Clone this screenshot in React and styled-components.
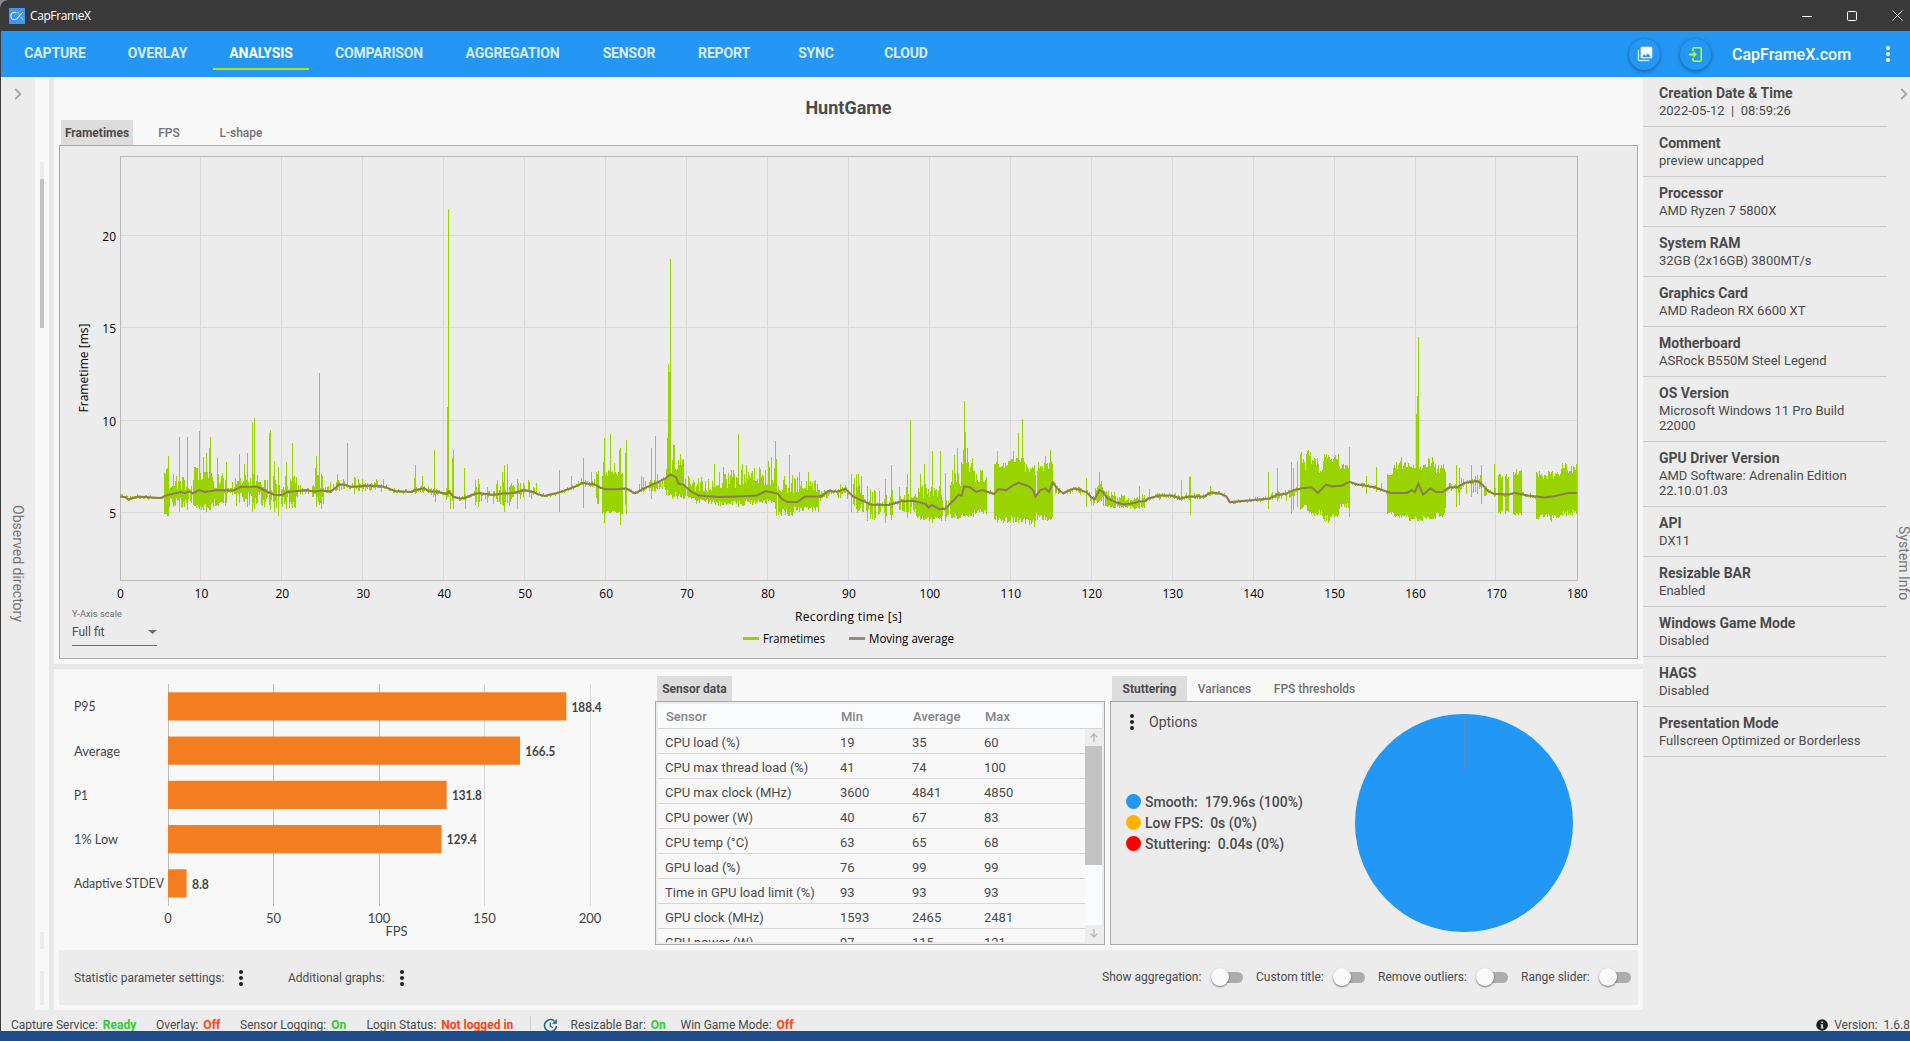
import React from "react";
import styled, { createGlobalStyle } from "styled-components";

const GlobalStyle = createGlobalStyle`
  * {
    box-sizing: border-box;
  }

  body {
    margin: 0;
    background: #8a8a8a;
    font-family: Roboto, "Liberation Sans", sans-serif;
    color: #4b4b4b;
    overflow: hidden;
  }
`;

/* ---------- data ---------- */

const NAV = [
  { label: "CAPTURE", width: 94 },
  { label: "OVERLAY", width: 91 },
  { label: "ANALYSIS", width: 96, active: true },
  { label: "COMPARISON", width: 120 },
  { label: "AGGREGATION", width: 127 },
  { label: "SENSOR", width: 86 },
  { label: "REPORT", width: 84 },
  { label: "SYNC", width: 80 },
  { label: "CLOUD", width: 80 },
];

const SYSTEM_INFO = [
  ["Creation Date & Time", "2022-05-12  |  08:59:26"],
  ["Comment", "preview uncapped"],
  ["Processor", "AMD Ryzen 7 5800X"],
  ["System RAM", "32GB (2x16GB) 3800MT/s"],
  ["Graphics Card", "AMD Radeon RX 6600 XT"],
  ["Motherboard", "ASRock B550M Steel Legend"],
  ["OS Version", "Microsoft Windows 11 Pro Build 22000"],
  ["GPU Driver Version", "AMD Software: Adrenalin Edition 22.10.01.03"],
  ["API", "DX11"],
  ["Resizable BAR", "Enabled"],
  ["Windows Game Mode", "Disabled"],
  ["HAGS", "Disabled"],
  ["Presentation Mode", "Fullscreen Optimized or Borderless"],
];

const SENSORS = [
  ["CPU load (%)", 19, 35, 60],
  ["CPU max thread load (%)", 41, 74, 100],
  ["CPU max clock (MHz)", 3600, 4841, 4850],
  ["CPU power (W)", 40, 67, 83],
  ["CPU temp (°C)", 63, 65, 68],
  ["GPU load (%)", 76, 99, 99],
  ["Time in GPU load limit (%)", 93, 93, 93],
  ["GPU clock (MHz)", 1593, 2465, 2481],
  ["GPU power (W)", 97, 115, 121],
];

const FPS_BARS = [
  ["P95", 188.4, 21.5],
  ["Average", 166.5, 46],
  ["P1", 131.8, 14],
  ["1% Low", 129.4, 44],
  ["Adaptive STDEV", 8.8, 90],
];

const TOGGLES = [
  { label: "Show aggregation:", width: 100 },
  { label: "Custom title:", width: 68 },
  { label: "Remove outliers:", width: 89 },
  { label: "Range slider:", width: 69 },
];

// moving average: time [s], frametime [ms]
const AVERAGE = [
  [0, 5.85], [0.6, 5.83], [1, 5.7], [2.2, 5.85], [5, 5.78], [5.8, 5.92], [7.5, 6.1], [8, 6.05], [8.5, 6.12],
  [9, 6.03], [9.8, 6.2], [10.5, 6.1], [12, 6.2], [14, 6.18], [15, 6.38], [17, 6.38], [18, 6.15], [19, 5.95],
  [20, 5.93], [20.7, 6.1], [23, 6.2], [24, 6.12], [25, 6.18], [26, 6.12], [26.7, 6.35], [27, 6.5], [27.7, 6.5],
  [28.5, 6.38], [31, 6.45], [32.5, 6.4], [34, 6.15], [36, 6.1], [36.6, 6.22], [37.6, 6.3], [38.2, 6.12],
  [39, 6.12], [40.4, 6], [40.6, 6.12], [41.2, 5.85], [42, 5.75], [42.7, 5.8], [43.5, 5.95], [44.3, 6.05],
  [46, 5.95], [47, 6], [48.5, 6.05], [50, 6.2], [51, 6.1], [51.7, 5.97], [52.5, 5.88], [53.1, 5.97], [54, 6.05],
  [55, 6.2], [56, 6.35], [57.2, 6.6], [58, 6.52], [58.5, 6.55], [59.2, 6.35], [60, 6.25], [61.5, 6.25],
  [62.5, 6.3], [63.6, 6.02], [65, 6.35], [66, 6.55], [67.3, 6.8], [68, 7.05], [68.7, 6.9], [69, 6.55],
  [69.6, 6.5], [70.5, 6.15], [71.5, 5.9], [74, 5.82], [77, 5.87], [78.7, 5.9], [79.8, 6.15], [81.3, 6],
  [81.8, 5.7], [82.5, 5.55], [83.7, 5.55], [84.6, 5.85], [86.6, 5.85], [87.5, 6.15], [88.7, 6.12], [89.6, 6.28],
  [90.6, 5.85], [91.6, 5.65], [92.8, 5.42], [95, 5.4], [96.5, 5.6], [98, 5.62], [99.5, 5.45], [99.9, 5.25],
  [100.3, 5.4], [101.2, 5.17], [101.9, 5.17], [103, 5.65], [103.6, 5.95], [104, 5.9], [104.3, 6.4], [105, 6.35],
  [105.8, 6.1], [106.5, 6.2], [108, 6], [108.5, 6.25], [109.5, 6.2], [110.3, 6.45], [111, 6.6], [112.3, 6.4],
  [112.8, 6.2], [113.1, 5.85], [113.7, 6.2], [114.3, 6.3], [114.8, 6.1], [115.2, 6.6], [116, 6.2], [116.5, 6.03],
  [117.3, 6.2], [118, 6.3], [119.4, 6.1], [120, 5.8], [120.4, 5.7], [121, 6.2], [121.3, 6.15], [122, 5.75],
  [123, 5.55], [124, 5.42], [125.3, 5.5], [126, 5.6], [126.6, 5.6], [127, 5.75], [128.5, 5.9], [130, 5.9],
  [131, 5.75], [132, 5.85], [134, 5.87], [134.8, 6.08], [136, 6], [136.7, 5.85], [137.1, 5.55], [140, 5.67],
  [142, 5.75], [143, 5.95], [144, 6], [145, 6.2], [146, 6.3], [147.2, 6.35], [148, 6.05], [149, 6.5],
  [149.7, 6.4], [151, 6.45], [151.9, 6.65], [153, 6.5], [155, 6.35], [157, 6.05], [159, 6.05], [159.6, 6.2],
  [160, 6.1], [160.4, 6.55], [161, 5.95], [161.9, 6.3], [162.6, 6.1], [163.4, 6.1], [164.2, 6.35],
  [165.2, 6.35], [166.2, 6.6], [167.7, 6.7], [168.3, 6.5], [169, 6.15], [169.7, 6], [171.5, 5.97], [172.3, 6.05],
  [174, 5.9], [176, 5.8], [177, 5.85], [178.5, 6], [179, 6.05], [180, 6.05],
];

// jitter around the average: from, to, density, top min/max, bottom min/max
const BANDS = [
  [5.4, 6, 1, 7, 7.4, 4.8, 5.1],
  [6, 9, 0.9, 6.2, 7.1, 5.2, 5.8],
  [9, 11.6, 1, 6.6, 7.5, 5.1, 5.5],
  [11.6, 13.2, 0.92, 6.3, 7.3, 5.3, 5.9],
  [13.2, 14.2, 0.5, 6.3, 6.7, 5.9, 6.1],
  [14.2, 17.4, 0.92, 6.4, 7.1, 5.3, 6.1],
  [17.4, 21.8, 0.9, 6.2, 7, 5.2, 5.9],
  [21.8, 24, 0.6, 6.2, 6.6, 5.8, 6.1],
  [24, 25.2, 0.8, 6.3, 7.1, 5.2, 5.9],
  [25.2, 29, 0.5, 6.3, 6.8, 6.1, 6.4],
  [29, 32.5, 0.7, 6.4, 7, 6.1, 6.4],
  [36, 38.3, 0.5, 6.2, 6.9, 6, 6.2],
  [38.3, 41.2, 0.45, 6.1, 6.5, 5.5, 6],
  [43.7, 46.4, 0.5, 6, 6.7, 5.4, 5.9],
  [46.4, 48.4, 0.8, 6.2, 6.8, 5.3, 5.8],
  [48.4, 51.5, 0.7, 6.2, 6.7, 5.7, 6.1],
  [56, 58.8, 0.4, 6.5, 6.9, 6.3, 6.5],
  [58.6, 59.1, 0.8, 6.9, 7.7, 5.2, 6],
  [59.5, 62.1, 0.97, 6.9, 7.8, 4.9, 5.1],
  [64, 67.4, 0.6, 6.3, 7.1, 6.1, 6.4],
  [67.4, 69.6, 1, 7.1, 8, 5.7, 6.3],
  [69.6, 71, 0.9, 6.3, 7.1, 5.7, 5.9],
  [71, 73.5, 0.98, 6.1, 6.9, 5.4, 5.7],
  [73.5, 77.3, 0.98, 6.3, 7.3, 5.3, 5.6],
  [77.3, 81, 0.98, 6.4, 7.6, 5.4, 5.7],
  [81, 83.2, 0.97, 6, 7.1, 4.8, 5.2],
  [83.2, 86.3, 0.97, 6.1, 7, 5, 5.3],
  [86.3, 87.6, 0.6, 5.9, 6.2, 5.6, 6],
  [88.5, 90.2, 0.5, 6.1, 6.6, 5.7, 6.1],
  [90.2, 92, 0.8, 5.9, 7.1, 4.9, 5.5],
  [92, 95.5, 0.7, 5.5, 6.3, 4.6, 5.1],
  [96, 98.4, 0.8, 5.7, 6.6, 4.8, 5.3],
  [98.4, 101.5, 1, 5.7, 6.6, 4.5, 4.8],
  [101.5, 102.4, 0.8, 5.4, 5.8, 4.7, 5],
  [102.5, 103.8, 1, 6.2, 7.4, 4.6, 4.9],
  [103.8, 105.4, 1, 7.1, 8, 4.7, 5],
  [105.4, 107.1, 0.95, 6.6, 7.5, 4.9, 5.2],
  [107.9, 109.8, 1, 7.4, 7.8, 4.4, 4.8],
  [109.8, 111.7, 1, 7.7, 8.1, 4.4, 4.8],
  [111.7, 113.05, 1, 7, 7.6, 4.3, 4.7],
  [113.05, 113.25, 1, 5.9, 6, 4.9, 5],
  [113.25, 115.2, 1, 7.2, 7.8, 4.5, 4.9],
  [115.5, 119, 0.25, 6.2, 6.4, 5.9, 6.1],
  [119.8, 120.4, 0.9, 5.8, 6.1, 5.3, 5.6],
  [120.4, 121.4, 1, 6.2, 6.7, 5.5, 5.9],
  [121.4, 123, 0.95, 5.8, 6.2, 5.2, 5.4],
  [123, 126.6, 0.9, 5.6, 6, 5.15, 5.35],
  [128, 134.4, 0.4, 5.8, 6.1, 5.65, 5.85],
  [141.8, 145.6, 0.45, 5.9, 6.3, 5.5, 5.9],
  [145.7, 146.6, 1, 7.2, 8.3, 5.1, 5.5],
  [146.6, 147.1, 1, 8, 8.4, 4.9, 5.2],
  [147.1, 148.1, 1, 7.5, 8, 4.8, 5],
  [148.1, 148.6, 0.95, 7, 7.4, 4.8, 5.1],
  [148.6, 150.5, 1, 7.7, 8.2, 4.5, 4.9],
  [150.5, 151.9, 1, 7.3, 7.7, 5.2, 5.5],
  [156.5, 157.4, 0.97, 7, 7.4, 4.8, 5],
  [157.4, 159.2, 1, 7.3, 7.8, 4.7, 4.9],
  [159.2, 161, 1, 7.2, 7.6, 4.5, 4.8],
  [161, 162.5, 1, 7.4, 8, 4.6, 4.8],
  [162.5, 163.6, 1, 7, 7.6, 4.7, 5],
  [164, 168.2, 0.4, 6.5, 7.1, 6, 6.4],
  [168.5, 170, 0.4, 6.1, 6.4, 5.8, 6.1],
  [170.2, 170.8, 1, 6.8, 7.1, 4.9, 5.1],
  [171.1, 171.6, 1, 6.7, 7.1, 4.9, 5.1],
  [172, 173.2, 1, 7, 7.4, 4.8, 5],
  [174.9, 178, 1, 6.8, 7.3, 4.6, 4.9],
  [178, 180, 1, 7.1, 7.7, 4.7, 5.1],
];

// single outliers: time, bottom, top
const SPIKES = [
  [5.9, 5, 8.05], [7.3, 5, 9.08], [8.3, 5.1, 9.08], [9.75, 5.2, 9.4], [10.2, 5.1, 8], [10.6, 5, 8.2],
  [10.95, 5.3, 8.5], [11.1, 5.1, 9.08], [12, 5.4, 7.95], [13.1, 5.5, 7.7], [14.7, 5.5, 8.15], [15.3, 5.8, 7.6],
  [15.65, 5.3, 8.2], [16.3, 5, 9.9], [16.55, 5.15, 10.1], [18.4, 5.4, 9.3], [18.55, 5.1, 9.45], [19, 5, 7.8],
  [19.5, 4.8, 7.45], [20.5, 5.2, 7.7], [21.25, 5.25, 8.75], [24.1, 6, 7.4], [24.25, 5.9, 8.05],
  [24.6, 5.4, 12.55], [24.8, 5.2, 7.1], [26.8, 6.3, 7.05], [28.1, 6.3, 8.75], [28.9, 6, 6.9], [36.45, 6, 7.55],
  [37.3, 6.1, 6.95], [38.8, 6, 8.4], [40.4, 5.8, 10.7], [40.55, 5.8, 21.45], [40.8, 5.15, 6.2], [41, 5.6, 7.95],
  [41.1, 5.15, 8.4], [42.5, 5.7, 7.4], [42.63, 5.15, 6], [43.9, 5.4, 6.75], [44.2, 5.3, 6.8], [47.2, 5.4, 7.2],
  [47.4, 5, 7.55], [47.8, 5.5, 7.6], [49, 5.15, 6.8], [50.4, 6.2, 6.75], [54.2, 5, 7.3], [55.7, 6.2, 6.97],
  [57.2, 5.25, 7.95], [58.2, 6.4, 7.2], [59.8, 4.4, 9.03], [60.55, 5, 9.25], [61.6, 5, 8.4], [61.75, 4.3, 8.5],
  [62.35, 5.4, 8.2], [62.5, 4.9, 8.9], [65.6, 5.7, 8.5], [66.1, 6.1, 9.15], [67.6, 6.6, 9], [67.73, 6, 13.05],
  [67.86, 6, 12.6], [68, 6, 18.7], [68.3, 5.8, 8.65], [68.45, 5.8, 8.65], [69.2, 5.8, 8.15], [73.4, 5.5, 7.6],
  [74.5, 5.4, 7.45], [76.35, 5.4, 9.25], [76.8, 5.5, 7.6], [80.1, 5.6, 7.8], [80.45, 5.5, 8], [80.9, 5.2, 8.85],
  [81.1, 5, 7.9], [82.65, 4.8, 8.1], [83.9, 5, 7.2], [85, 5.1, 7.2], [90.3, 5, 7.1], [92.3, 4.5, 6.4],
  [93.1, 4.6, 6.2], [94.5, 4.4, 6.8], [95.3, 4.6, 7.55], [97.2, 4.7, 7.1], [97.6, 4.9, 10], [98.9, 4.6, 7.1],
  [99.3, 4.6, 7.6], [100.3, 4.4, 8.3], [101.3, 4.8, 8.3], [101.9, 4.5, 7.15], [103, 4.7, 8.1], [103.4, 4.7, 8.5],
  [104.15, 4.8, 8.4], [104.28, 4.8, 11.05], [104.4, 4.8, 9.35], [104.6, 4.8, 8.5], [108.35, 4.4, 8.3],
  [110.3, 4.4, 8.3], [110.95, 4.4, 9.3], [111.45, 4.5, 10.05], [112.95, 4.2, 7.5], [114.3, 4.6, 8.05],
  [114.9, 4.8, 8.4], [119.35, 5.3, 6.85], [120.95, 5.6, 7.2], [125.9, 5.2, 6.4], [127.1, 5.7, 6.25],
  [131.1, 5.7, 6.75], [132.1, 5.7, 6.9], [132.2, 4.87, 6.97], [134.7, 5.9, 6.4], [141.8, 5.15, 7.2],
  [142.95, 5.6, 7.4], [144.7, 4.9, 7.7], [144.95, 5.1, 7.4], [145.4, 5.3, 7.8], [149.3, 4.4, 8.1],
  [151.85, 4.75, 8.55], [154, 6, 6.97], [155.15, 6.1, 7.45], [155.8, 6.2, 6.6], [158.3, 4.7, 8],
  [160.13, 4.7, 10.35], [160.25, 4.7, 11.3], [160.38, 4.5, 14.5], [163.75, 5.25, 7.2], [165, 5.3, 7.55],
  [165.4, 5.4, 7.4], [166.9, 5.8, 7.55], [168.1, 5.45, 7.55], [169.7, 5.8, 7.6], [176.8, 4.45, 7.2],
];

/* ---------- frametime chart ---------- */

const X0 = 60;
const Y0 = 458.5;
const PX_PER_S = 8.094;
const PX_PER_MS = 18.45;
const px = (t) => X0 + t * PX_PER_S;
const py = (v) => Y0 - v * PX_PER_MS;

const averageAt = (t) => {
  for (let i = 1; i < AVERAGE.length; i++) {
    const [t1, v1] = AVERAGE[i];
    if (t <= t1) {
      const [t0, v0] = AVERAGE[i - 1];
      return v0 + ((v1 - v0) * (t - t0)) / (t1 - t0);
    }
  }
  return AVERAGE[AVERAGE.length - 1][1];
};

const buildFrametimes = () => {
  let seed = 4711;
  const random = () => {
    seed = (seed * 1664525 + 1013904223) % 4294967296;
    return seed / 4294967296;
  };
  let d = "";
  const column = (x, lo, hi) => {
    const top = Math.round(py(hi));
    const bottom = Math.round(py(lo));
    d += `M${x} ${top}h1V${Math.max(bottom, top + 2)}h-1z`;
  };

  for (let x = X0; x < X0 + 1457; x++) {
    const t = (x - X0) / PX_PER_S;
    const mid = averageAt(t);
    column(x, mid - 0.03 - (random() > 0.8 ? 0.1 : 0), mid + 0.03 + (random() > 0.8 ? 0.1 : 0));
    const band = BANDS.find(([from, to]) => t >= from && t < to);
    const roll = random();
    const up = random();
    const down = random();
    if (band && roll < band[2]) {
      const [, , density, t0, t1, b0, b1] = band;
      // sparse bands keep most of their samples near the average
      const bias = density < 1 ? 1.4 : 1;
      const hi = t0 + (t1 - t0) * Math.pow(up, bias);
      const lo = b1 - (b1 - b0) * Math.pow(down, bias);
      column(x, Math.min(lo, mid), Math.max(hi, mid));
    }
  }
  SPIKES.forEach(([t, lo, hi]) => column(Math.round(px(t)), lo, hi));
  return d;
};

const FRAMETIME_PATH = buildFrametimes();
const AVERAGE_PATH = AVERAGE.map(([t, v], i) => `${i ? "L" : "M"}${px(t).toFixed(1)} ${py(v).toFixed(1)}`).join("");

const SECONDS = Array.from({ length: 19 }, (_, i) => i * 10);

const FrametimeChart = () => (
  <PlotSvg width="1577" height="450" viewBox="0 0 1577 450">
    <g stroke="#d9d9d9" shapeRendering="crispEdges">
      {SECONDS.slice(1, -1).map((s) => (
        <line key={s} x1={px(s)} x2={px(s)} y1="11" y2="434" />
      ))}
      {[5, 10, 15, 20].map((v) => (
        <line key={v} x1={X0} x2={X0 + 1457} y1={py(v)} y2={py(v)} />
      ))}
    </g>
    <rect x="60.5" y="10.5" width="1457" height="424" fill="none" stroke="#b9b9b9" />
    <path d={FRAMETIME_PATH} fill="#9ad400" shapeRendering="crispEdges" />
    <path d={AVERAGE_PATH} fill="none" stroke="#8a7558" strokeOpacity="0.93" strokeWidth="2" />
    {SECONDS.map((s) => (
      <text key={s} x={px(s) + 0.5} y="452" textAnchor="middle">
        {s}
      </text>
    ))}
    {[5, 10, 15, 20].map((v) => (
      <text key={v} x="56" y={py(v) + 5.5} textAnchor="end">
        {v}
      </text>
    ))}
    <text x="-222" y="28" transform="rotate(-90)" textAnchor="middle" textLength="89">
      Frametime [ms]
    </text>
    <text x="735" y="475" textLength="107">
      Recording time [s]
    </text>
    <rect x="683" y="491" width="16" height="3" fill="#9ad400" />
    <text x="703" y="497" textLength="62" lengthAdjust="spacingAndGlyphs">
      Frametimes
    </text>
    <rect x="789" y="491" width="16" height="3" fill="#9f8480" />
    <text x="809" y="497" textLength="85" lengthAdjust="spacingAndGlyphs">
      Moving average
    </text>
  </PlotSvg>
);

/* ---------- fps bars ---------- */

const FpsBars = () => (
  <BarsSvg width="596" height="281" viewBox="0 0 596 281">
    <g shapeRendering="crispEdges">
      {[0, 50, 100, 150, 200].map((v) => (
        <rect key={v} x={Math.round(108.6 + v * 2.11)} y="15" width="1" height="222" fill={v > 100 ? "#d8d8d8" : "#bdbdbd"} />
      ))}
    </g>
    {FPS_BARS.map(([label, value, width], i) => (
      <g key={label}>
        <text x="15" y={42.3 + i * 44.25} textLength={width} lengthAdjust="spacingAndGlyphs">
          {label}
        </text>
        <rect x="109" y={23.3 + i * 44.25} width={value * 2.114} height="28.2" fill="#f37d21" />
        <text
          className="value"
          x={114.3 + value * 2.114}
          y={42.6 + i * 44.25}
          textLength={value < 10 ? 17 : 30}
          lengthAdjust="spacingAndGlyphs"
        >
          {value}
        </text>
      </g>
    ))}
    {[0, 50, 100, 150, 200].map((v) => (
      <text key={v} x={109 + v * 2.11} y="254" textAnchor="middle">
        {v}
      </text>
    ))}
    <text x="337.5" y="267" textAnchor="middle">
      FPS
    </text>
  </BarsSvg>
);

/* ---------- small parts ---------- */

const Chevron = () => (
  <svg width="8" height="12" viewBox="0 0 8 12" fill="none" stroke="#a3a3a3" strokeWidth="1.8">
    <path d="M1.2 0.8 6.3 6 1.2 11.2" />
  </svg>
);

const Kebab = ({ color = "#222" }) => (
  <svg width="6" height="18" viewBox="0 0 6 18" fill={color}>
    <circle cx="3" cy="3" r="2" />
    <circle cx="3" cy="9" r="2" />
    <circle cx="3" cy="15" r="2" />
  </svg>
);

const Status = ({ label, value, ok, width }) => (
  <StatusItem $width={width}>
    {label} <StatusValue $ok={ok}>{value}</StatusValue>
  </StatusItem>
);

const App = () => {
  return (
    <Window>
      <GlobalStyle />
      <TitleBar>
        <Logo width="16" height="16" viewBox="0 0 16 16">
          <rect width="16" height="16" fill="#3f97f6" />
          <path d="M7.5 4.5H3.8L2 6v4l1.8 1.5h3.4L14 4" fill="none" stroke="#fff" />
          <path d="M9 4.5l1.6 2.2M12 9l2.4 3" stroke="#7bea3a" strokeWidth="1.3" fill="none" />
        </Logo>
        <AppName>CapFrameX</AppName>
        <WindowButtons>
          <svg width="10" height="10" viewBox="0 0 10 10" stroke="#fff"><path d="M0 5.5h10" /></svg>
          <svg width="10" height="10" viewBox="0 0 10 10" stroke="#fff" fill="none"><rect x=".5" y=".5" width="9" height="9" rx="1" /></svg>
          <svg width="11" height="11" viewBox="0 0 11 11" stroke="#fff"><path d="M.5.5l10 10M10.5.5l-10 10" /></svg>
        </WindowButtons>
      </TitleBar>

      <NavBar>
        {NAV.map((item) => (
          <NavTab key={item.label} $width={item.width} $active={item.active}>
            {item.label}
          </NavTab>
        ))}
        <NavActions>
          <RoundButton>
            <svg width="16" height="16" viewBox="1 1 22 22" fill="#fff">
              <path d="M22 16V4c0-1.100-.9-2-2-2H8c-1.100 0-2 .9-2 2v12c0 1.100.9 2 2 2h12c1.100 0 2-.9 2-2zm-11-4l2.030 2.710L16 11l4 5H8l3-4z" />
              <path d="M2 6v14c0 1.100.9 2 2 2h14v-2H4V6H2z" opacity=".75" />
            </svg>
          </RoundButton>
          <RoundButton>
            <svg width="13" height="15" viewBox="0 0 13 15" fill="none" stroke="#adff2f" strokeWidth="1.6">
              <path d="M4 4V1.800q0-1 1-1h6.200q1 0 1 1v11.400q0 1-1 1H5q-1 0-1-1V11" />
              <path d="M0 7.500h5" strokeWidth="2" />
              <path d="M4.400 4.200 8 7.500l-3.600 3.300z" fill="#adff2f" stroke="none" />
            </svg>
          </RoundButton>
          <SiteLink>CapFrameX.com</SiteLink>
          <Kebab color="#fff" />
        </NavActions>
      </NavBar>

      <Body>
        <Rail>
          <Chevron />
          <RailLabel $top={405}>Observed directory</RailLabel>
        </Rail>
        <ScrollGutter>
          <GutterPiece $top={85} $height={17} />
          <GutterPiece $height={149} $thumb />
          <GutterPiece $top={604} $height={17} />
          <GutterPiece $top={22} $height={34} />
        </ScrollGutter>
        <Splitter />

        <Main>
          <GameTitle>HuntGame</GameTitle>
          <TabRow $inset={2}>
            <Tab $width={72} $active>Frametimes</Tab>
            <Tab $width={72}>FPS</Tab>
            <Tab $width={72}>L-shape</Tab>
          </TabRow>
          <ChartPanel>
            <FrametimeChart />
            <ScaleSelect>
              <ScaleLabel>Y-Axis scale</ScaleLabel>
              <ScaleValue>
                Full fit
                <svg width="9" height="4" viewBox="0 0 9 4" fill="#707070"><path d="M0 0h9L4.500 4z" /></svg>
              </ScaleValue>
            </ScaleSelect>
          </ChartPanel>
          <RowSplitter />

          <BottomRow>
            <FpsBars />
            <SensorColumn>
              <TabRow $inset={2}>
                <Tab $width={75} $active>Sensor data</Tab>
              </TabRow>
              <Panel>
                <SensorTable>
                  <SensorHead>
                    <span>Sensor</span>
                    <span>Min</span>
                    <span>Average</span>
                    <span>Max</span>
                  </SensorHead>
                  <SensorScroll>
                    <SensorRows>
                      {SENSORS.map(([name, ...values]) => (
                        <SensorRow key={name}>
                          <span>{name}</span>
                          {values.map((value, i) => (
                            <span key={i}>{value}</span>
                          ))}
                        </SensorRow>
                      ))}
                    </SensorRows>
                    <Scrollbar>
                      <ScrollArrow>
                        <svg width="8" height="9" viewBox="0 0 8 9" fill="none" stroke="#b5b7b6" strokeWidth="1.300"><path d="M4 9V1M.6 4.400 4 1l3.400 3.400" /></svg>
                      </ScrollArrow>
                      <ScrollThumb />
                      <ScrollArrow $end>
                        <svg width="8" height="9" viewBox="0 0 8 9" fill="none" stroke="#b5b7b6" strokeWidth="1.300"><path d="M4 0v8M.6 4.600 4 8l3.400-3.400" /></svg>
                      </ScrollArrow>
                    </Scrollbar>
                  </SensorScroll>
                </SensorTable>
              </Panel>
            </SensorColumn>

            <StutterColumn>
              <TabRow $inset={2}>
                <Tab $width={75} $active>Stuttering</Tab>
                <Tab $width={75}>Variances</Tab>
                <Tab $width={105}>FPS thresholds</Tab>
              </TabRow>
              <StutterPanel>
                <StutterSide>
                  <Options>
                    <Kebab />
                    Options
                  </Options>
                  <Legend>
                    <li><Dot $color="#2397f4" />Smooth:&nbsp; 179.96s (100%)</li>
                    <li><Dot $color="#ffb300" />Low FPS:&nbsp; 0s (0%)</li>
                    <li><Dot $color="#ff0000" />Stuttering:&nbsp; 0.04s (0%)</li>
                  </Legend>
                </StutterSide>
                <Pie width="218" height="218" viewBox="0 0 218 218">
                  <circle cx="109" cy="109" r="109" fill="#2397f4" />
                  <path d="M109.500 0v55" stroke="#5c8ad0" />
                </Pie>
              </StutterPanel>
            </StutterColumn>
          </BottomRow>

          <SettingsBar>
            <SettingLabel $width={150}>Statistic parameter settings:</SettingLabel>
            <Kebab />
            <SettingLabel $width={97} $left={30}>Additional graphs:</SettingLabel>
            <Kebab />
            <Toggles>
              {TOGGLES.map(({ label, width }) => (
                <ToggleItem key={label}>
                  <SettingLabel $width={width}>{label}</SettingLabel>
                  <Track>
                    <Knob />
                  </Track>
                </ToggleItem>
              ))}
            </Toggles>
          </SettingsBar>
        </Main>

        <InfoPanel>
          {SYSTEM_INFO.map(([name, value]) => (
            <InfoItem key={name}>
              <h4>{name}</h4>
              <p>{value}</p>
            </InfoItem>
          ))}
        </InfoPanel>
        <InfoRail>
          <Chevron />
          <RailLabel $top={426}>System Info</RailLabel>
        </InfoRail>
      </Body>

      <StatusBar>
        <Status label="Capture Service:" value="Ready" ok width={145} />
        <Status label="Overlay:" value="Off" width={84} />
        <Status label="Sensor Logging:" value="On" ok width={126.5} />
        <Status label="Login Status:" value="Not logged in" width={163} />
        <Divider />
        <svg width="15" height="15" viewBox="0 0 15 15" fill="none" stroke="#1f6587" strokeWidth="1.600">
          <path d="M11.200 2.800A6 6 0 1 0 13.500 8" />
          <path d="M13.800 1v4.800H9z" fill="#1f6587" stroke="none" />
          <path d="M7.300 4.500v3.700l2.600 1.600" strokeWidth="1.300" />
        </svg>
        <Spacer />
        <Status label="Resizable Bar:" value="On" ok width={110} />
        <Status label="Win Game Mode:" value="Off" width={120} />
        <Version>
          <svg width="14" height="14" viewBox="0 0 14 14">
            <circle cx="7" cy="7" r="6.700" fill="#1d1d1d" />
            <path d="M6 3h2v1.700H6zM5.300 6H8v3.800h.8V11H5.300V9.800h.8V7.200h-.8z" fill="#ececec" />
          </svg>
          <span>Version:&nbsp; 1.6.8</span>
        </Version>
      </StatusBar>
      <Taskbar />
    </Window>
  );
};

/* ---------- styles ---------- */

const Window = styled.div`
  display: flex;
  flex-direction: column;
  width: 1910px;
  height: 1041px;
  overflow: hidden;
  border-radius: 8px 0 0 0;
  background: #ececec;
`;

const TitleBar = styled.header`
  display: flex;
  align-items: center;
  height: 31px;
  padding-left: 9px;
  background: #3a3a3a;
`;

const Logo = styled.svg`
  margin-right: 5px;
`;

const AppName = styled.span`
  font: 12px "Open Sans", "Noto Sans", sans-serif;
  letter-spacing: -0.4px;
  color: #fff;
`;

const WindowButtons = styled.div`
  display: flex;
  align-items: center;
  gap: 35px;
  margin-left: auto;
  padding-right: 7px;
`;

const NavBar = styled.nav`
  display: flex;
  gap: 10px;
  height: 46px;
  padding-left: 7px;
  border-left: 1px solid #3a3a3a;
  background: #2397f3;
`;

const NavTab = styled.div`
  width: ${(p) => p.$width}px;
  height: 39px;
  line-height: 45px;
  text-align: center;
  font-size: 14px;
  font-weight: 700;
  letter-spacing: -0.15px;
  color: ${(p) => (p.$active ? "#fff" : "#d8ecfd")};
  border-bottom: 2px solid ${(p) => (p.$active ? "#aeea00" : "transparent")};
`;

const NavActions = styled.div`
  display: flex;
  align-items: center;
  margin-left: auto;
  padding-right: 19px;
`;

const RoundButton = styled.div`
  display: flex;
  align-items: center;
  justify-content: center;
  width: 31px;
  height: 31px;
  margin-right: 20px;
  border-radius: 50%;
  background: #2397f3;
  box-shadow: 0 1px 4px rgba(0, 0, 0, 0.42);
`;

const SiteLink = styled.span`
  width: 121px;
  margin: 0 32px 0 1px;
  font-size: 16px;
  font-weight: 500;
  color: #fff;
`;

const Body = styled.div`
  display: flex;
  height: 933px;
`;

const Rail = styled.div`
  display: flex;
  flex-direction: column;
  align-items: center;
  width: 35px;
  padding-top: 11px;
  border-left: 1px solid #3a3a3a;
`;

const RailLabel = styled.div`
  margin-top: ${(p) => p.$top}px;
  writing-mode: vertical-rl;
  font-size: 14px;
  line-height: 16px;
  color: #757575;
`;

const ScrollGutter = styled.div`
  display: flex;
  flex-direction: column;
  align-items: center;
  width: 14px;
  background: #f8f8f8;
`;

const GutterPiece = styled.div`
  width: 4px;
  height: ${(p) => p.$height}px;
  margin-top: ${(p) => p.$top || 0}px;
  background: ${(p) => (p.$thumb ? "#c2c2c2" : "#ebebeb")};
`;

const Splitter = styled.div`
  width: 5px;
  background: #e8e8e8;
`;

const Main = styled.main`
  display: flex;
  flex-direction: column;
  width: 1589px;
  padding-left: 5px;
  background: #f8f8f8;
`;

const GameTitle = styled.h1`
  height: 43px;
  margin: 0 5px 0 0;
  padding-top: 20px;
  font-size: 18px;
  line-height: 22px;
  text-align: center;
  color: #4b4b4b;
`;

const TabRow = styled.div`
  display: flex;
  height: 25px;
  padding-left: ${(p) => p.$inset}px;
`;

const Tab = styled.div`
  width: ${(p) => p.$width}px;
  line-height: 26px;
  text-align: center;
  font-size: 12px;
  font-weight: ${(p) => (p.$active ? 700 : 500)};
  color: ${(p) => (p.$active ? "#4b4b4b" : "#707070")};
  background: ${(p) => (p.$active ? "#dddddd" : "transparent")};
`;

const Panel = styled.section`
  height: 244px;
  border: 1px solid #a9a9a9;
  background: #ececec;
`;

const ChartPanel = styled.section`
  width: 1579px;
  height: 514px;
  border: 1px solid #a9a9a9;
  background: #ececec;
`;

const PlotSvg = styled.svg`
  display: block;
  overflow: visible;

  text {
    font: 12px "Open Sans", "Noto Sans", sans-serif;
    fill: #000;
  }
`;

const ScaleSelect = styled.div`
  width: 85px;
  margin: 12px 0 0 12px;
`;

const ScaleLabel = styled.div`
  font-size: 9.3px;
  line-height: 12px;
  color: #6c6c6c;
`;

const ScaleValue = styled.div`
  display: flex;
  align-items: center;
  justify-content: space-between;
  height: 26px;
  padding-bottom: 1px;
  border-bottom: 1px solid #6a6a6a;
  font-size: 12px;
`;

const RowSplitter = styled.div`
  height: 5px;
  margin: 5px 0 0 -5px;
  background: #e7e7e7;
`;

const BottomRow = styled.div`
  display: flex;
  height: 281px;
`;

const BarsSvg = styled.svg`
  text {
    font: 13px Lato, "Open Sans", sans-serif;
    fill: #444;
  }

  .value {
    font-weight: 700;
  }
`;

const SensorColumn = styled.div`
  width: 450px;
  margin-right: 5px;
  padding-top: 7px;
`;

const SensorTable = styled.div`
  margin: 2px;
  height: 238px;
  overflow: hidden;
  border-radius: 3px;
  background: #f8f8f8;
`;

const SensorRow = styled.div`
  display: grid;
  grid-template-columns: 175px 72px 72px 1fr;
  height: 25px;
  padding-left: 7px;
  line-height: 27px;
  border-bottom: 1px solid #d6d6d6;
  font-size: 13px;
`;

const SensorHead = styled(SensorRow)`
  padding-left: 8px;
  background: #fafbfd;
  font-weight: 500;
  line-height: 26px;
  color: #858585;
`;

const SensorScroll = styled.div`
  display: flex;
  height: 213px;
`;

const SensorRows = styled.div`
  flex: 1;
  overflow: hidden;
`;

const Scrollbar = styled.div`
  display: flex;
  flex-direction: column;
  width: 17px;
  background: #fafbfd;
`;

const ScrollArrow = styled.div`
  display: flex;
  align-items: center;
  justify-content: center;
  height: 17px;
  margin-top: ${(p) => (p.$end ? "auto" : 0)};
  background: #ededed;
`;

const ScrollThumb = styled.div`
  height: 119px;
  background: #c2c3c2;
`;

const StutterColumn = styled.div`
  width: 528px;
  padding-top: 7px;
`;

const StutterPanel = styled(Panel)`
  display: flex;
  padding: 12px 0 0 18px;
`;

const StutterSide = styled.div`
  width: 226px;
`;

const Options = styled.div`
  display: flex;
  align-items: center;
  gap: 14px;
  height: 18px;
  margin-top: -1px;
  font-size: 14px;
`;

const Legend = styled.ul`
  margin: 60px 0 0 -3px;
  padding: 0;
  list-style: none;

  li {
    display: flex;
    align-items: center;
    height: 21px;
    font-size: 14px;
    font-weight: 500;
    white-space: pre;
  }
`;

const Dot = styled.i`
  width: 15px;
  height: 15px;
  margin-right: 4px;
  border-radius: 50%;
  background: ${(p) => p.$color};
`;

const Pie = styled.svg`
  flex: none;
`;

const SettingsBar = styled.div`
  display: flex;
  align-items: center;
  width: 1579px;
  height: 55px;
  padding: 0 7px 0 15px;
  background: #ececec;
`;

const SettingLabel = styled.span`
  width: ${(p) => p.$width}px;
  margin-left: ${(p) => (p.$left ? p.$left + 14 : 0)}px;
  margin-right: 14px;
  font-size: 12px;
  white-space: nowrap;
`;

const Toggles = styled.div`
  display: flex;
  gap: 13px;
  margin-left: auto;
  padding-bottom: 1px;
`;

const ToggleItem = styled.div`
  display: flex;
  align-items: center;

  ${SettingLabel} {
    margin-right: 9px;
  }
`;

const Track = styled.div`
  display: flex;
  align-items: center;
  width: 32px;
  height: 11px;
  border-radius: 6px;
  background: linear-gradient(90deg, transparent 10px, #adadad 10px);
`;

const Knob = styled.div`
  flex: none;
  width: 18px;
  height: 18px;
  border-radius: 50%;
  background: #fafafa;
  box-shadow: 0 1px 2px rgba(0, 0, 0, 0.5);
`;

const InfoPanel = styled.aside`
  width: 244px;
  background: #ececec;
`;

const InfoItem = styled.div`
  padding: 7px 0 8px 16px;
  border-bottom: 1px solid #cbcbcb;

  h4 {
    margin: 0;
    font-size: 14px;
    font-weight: 700;
    line-height: 19px;
  }

  p {
    width: 210px;
    margin: 0;
    font-size: 13px;
    line-height: 15px;
    white-space: pre-wrap;
  }
`;

const InfoRail = styled(Rail)`
  flex: none;
  width: 23px;
  padding-left: 10px;
  border-left: 0;
`;

const StatusBar = styled.footer`
  display: flex;
  align-items: center;
  height: 21px;
  padding: 9px 0 0 10px;
  border-left: 1px solid #3a3a3a;
  overflow: hidden;
  font-size: 12px;
`;

const StatusItem = styled.div`
  flex: none;
  width: ${(p) => p.$width}px;
  white-space: nowrap;
`;

const StatusValue = styled.b`
  margin-left: 2px;
  color: ${(p) => (p.$ok ? "#32cd32" : "#ff4314")};
`;

const Divider = styled.div`
  width: 1px;
  height: 18px;
  margin-right: 12px;
  background: #cfcfcf;
`;

const Spacer = styled.div`
  width: 13px;
`;

const Version = styled.div`
  display: flex;
  flex: none;
  align-items: center;
  gap: 6px;
  width: 94px;
  margin-left: auto;
  white-space: nowrap;
`;

const Taskbar = styled.div`
  flex: 1;
  background: #1f4b88;
`;

export default App;
